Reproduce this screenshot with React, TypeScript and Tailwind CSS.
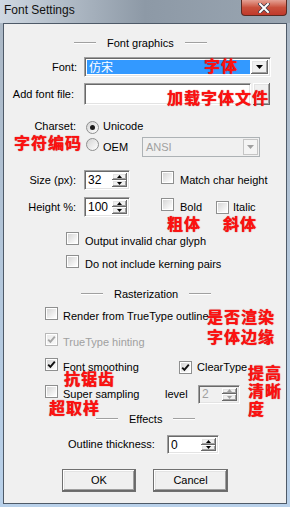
import React from 'react';

const sunken =
  'border border-t-[#a0a0a0] border-l-[#a0a0a0] border-r-white border-b-white shadow-[inset_1px_1px_0_#696969,inset_-1px_-1px_0_#e3e3e3]';
const raised =
  'bg-[#f0f0f0] shadow-[inset_-1px_-1px_0_#696969,inset_1px_1px_0_#ffffff,inset_-2px_-2px_0_#a0a0a0,inset_2px_2px_0_#e3e3e3]';

const Check = ({ checked = false, disabled = false }: { checked?: boolean; disabled?: boolean }) => (
  <span
    className={`relative inline-flex w-[13px] h-[13px] shrink-0 border bg-white ${
      disabled ? 'border-[#b8b8b8]' : 'border-[#8e8f8f]'
    }`}
  >
    <span
      className={`absolute inset-[1px] bg-gradient-to-br ${
        disabled ? 'from-[#ececec] to-[#f8f8f8]' : 'from-[#d6d6d6] to-white'
      }`}
    />
    {checked && (
      <svg viewBox="0 0 11 11" className="absolute inset-0 w-[11px] h-[11px]">
        <path
          d="M2.2 5.6 L4.4 7.9 L8.8 2.6"
          fill="none"
          stroke={disabled ? '#a5a5a5' : '#111'}
          strokeWidth="1.9"
        />
      </svg>
    )}
  </span>
);

const Radio = ({ checked = false }: { checked?: boolean }) => (
  <span className="inline-flex w-[13px] h-[13px] shrink-0 items-center justify-center rounded-full border border-[#8e8f8f] bg-gradient-to-br from-[#d4d4d4] to-white">
    {checked && <span className="w-[5px] h-[5px] rounded-full bg-[#1b1b1b]" />}
  </span>
);

const Arrow = ({ up, disabled }: { up?: boolean; disabled?: boolean }) => (
  <svg viewBox="0 0 5 3" className="w-[5px] h-[3px]">
    <path d={up ? 'M0 3 L2.5 0 L5 3 Z' : 'M0 0 L5 0 L2.5 3 Z'} fill={disabled ? '#a0a0a0' : '#000'} />
  </svg>
);

const Spin = ({
  value,
  w,
  h,
  disabled = false,
}: {
  value: string;
  w: string;
  h: string;
  disabled?: boolean;
}) => (
  <div className={`flex ${w} ${h} ${sunken} p-[2px] ${disabled ? 'bg-[#f0f0f0]' : 'bg-white'}`}>
    <span className={`flex-1 flex items-center pl-[1px] text-[12px] ${disabled ? 'text-[#a0a0a0]' : 'text-black'}`}>
      {value}
    </span>
    <div className="flex flex-col w-[15px]">
      <span className={`flex-1 flex items-center justify-center ${raised}`}>
        <Arrow up disabled={disabled} />
      </span>
      <span className={`flex-1 flex items-center justify-center ${raised}`}>
        <Arrow disabled={disabled} />
      </span>
    </div>
  </div>
);

const Header = ({ title, ml }: { title: string; ml: string }) => (
  <div className={`flex items-center h-[14px] gap-[11px] ${ml}`}>
    <span className="w-[22px] h-[2px] border-t border-t-[#a0a0a0] border-b border-b-white" />
    <span>{title}</span>
    <span className="w-[22px] h-[2px] border-t border-t-[#a0a0a0] border-b border-b-white" />
  </div>
);

const Note = ({ text, cls }: { text: string; cls: string }) => (
  <span
    className={`absolute font-['Noto_Sans_CJK_SC',sans-serif] font-bold text-[16px] leading-[17px] tracking-[1px] text-[#ff1010] [text-shadow:0_0_1px_#b00000] whitespace-nowrap ${cls}`}
  >
    {text}
  </span>
);

export default function App() {
  return (
    <div className="relative w-[290px] h-[507px] overflow-hidden bg-gradient-to-b from-[#aab6c3] via-[#b3c6da] to-[#b9d1ea] font-['Liberation_Sans',Arial,sans-serif] text-[11px] text-black">
      {/* title bar */}
      <div className="relative h-[23px] bg-gradient-to-r from-[#cfd8e2] via-[#8d99a6] to-[#9aa6b2]">
        <span className="absolute left-[4px] top-[3px] text-[12px] leading-[14px] text-[#111]">Font Settings</span>
        <span className="absolute right-[3px] top-0 w-[46px] h-[16px] rounded-b-[4px] border border-[#5a2a22] border-t-0 bg-gradient-to-b from-[#e4a195] via-[#c9503c] to-[#c0392b] flex items-center justify-center">
          <svg viewBox="0 0 12 10" className="w-[12px] h-[10px]">
            <path d="M2 1 L10 9 M10 1 L2 9" stroke="#3a3a4a" strokeWidth="3.4" strokeLinecap="square" />
            <path d="M2 1 L10 9 M10 1 L2 9" stroke="#fff" strokeWidth="2" strokeLinecap="square" />
          </svg>
        </span>
      </div>

      {/* client */}
      <div className="mx-[3px] h-[481px] border border-[#4e5a68] bg-[#f0f0f0] flex flex-col">
        <div className="mt-[12px]">
          <Header title="Font graphics" ml="ml-[70px]" />
        </div>

        <div className="mt-[7px] flex items-center h-[20px]">
          <span className="w-[73px] text-right">Font:</span>
          <div className={`ml-[7px] w-[187px] h-[20px] flex bg-white ${sunken} p-[2px]`}>
            <span className="flex-1 bg-[#3399ff] text-white flex items-center pl-[2px] font-['Noto_Sans_CJK_SC',sans-serif] text-[12px] mr-[1px]">
              仿宋
            </span>
            <span className={`w-[17px] flex items-center justify-center ${raised}`}>
              <svg viewBox="0 0 7 4" className="w-[7px] h-[4px]">
                <path d="M0 0 L7 0 L3.5 4 Z" fill="#000" />
              </svg>
            </span>
          </div>
        </div>

        <div className="mt-[6px] flex items-center h-[22px]">
          <span className="w-[73px] pr-[3px] text-right">Add font file:</span>
          <div className={`ml-[7px] w-[167px] h-[22px] bg-white ${sunken}`} />
          <div className={`ml-[2px] w-[17px] h-[22px] ${raised}`} />
        </div>

        <div className="mt-[14px] flex items-center h-[14px]">
          <span className="w-[73px] pr-[1px] text-right">Charset:</span>
          <span className="ml-[9px]">
            <Radio checked />
          </span>
          <span className="ml-[4px]">Unicode</span>
        </div>

        <div className="mt-[4px] flex items-center h-[20px]">
          <span className="ml-[82px]">
            <Radio />
          </span>
          <span className="ml-[4px] w-[39px]">OEM</span>
          <div className="w-[118px] h-[20px] flex border border-[#adb2b5] bg-[#f0f0f0] p-[1px]">
            <span className="flex-1 flex items-center pl-[2px] text-[#a0a0a0]">ANSI</span>
            <span className="w-[15px] flex items-center justify-center border border-[#c5c5c5] bg-[#f4f4f4]">
              <svg viewBox="0 0 7 4" className="w-[7px] h-[4px]">
                <path d="M0 0 L7 0 L3.5 4 Z" fill="#a0a0a0" />
              </svg>
            </span>
          </div>
        </div>

        <div className="mt-[13px] flex items-center h-[20px]">
          <span className="w-[73px] pr-[1px] text-right">Size (px):</span>
          <span className="ml-[7px]">
            <Spin value="32" w="w-[46px]" h="h-[20px]" />
          </span>
          <span className="ml-[31px]">
            <Check />
          </span>
          <span className="ml-[6px]">Match char height</span>
        </div>

        <div className="mt-[7px] flex items-center h-[20px]">
          <span className="w-[73px] pr-[1px] text-right">Height %:</span>
          <span className="ml-[7px]">
            <Spin value="100" w="w-[46px]" h="h-[20px]" />
          </span>
          <span className="ml-[31px]">
            <Check />
          </span>
          <span className="ml-[6px] w-[36px]">Bold</span>
          <Check />
          <span className="ml-[4px]">Italic</span>
        </div>

        <div className="mt-[17px] flex items-center h-[14px]">
          <span className="ml-[62px]">
            <Check />
          </span>
          <span className="ml-[6px]">Output invalid char glyph</span>
        </div>

        <div className="mt-[9px] flex items-center h-[14px]">
          <span className="ml-[62px]">
            <Check />
          </span>
          <span className="ml-[6px]">Do not include kerning pairs</span>
        </div>

        <div className="mt-[16px]">
          <Header title="Rasterization" ml="ml-[77px]" />
        </div>

        <div className="mt-[8px] flex items-center h-[14px]">
          <span className="ml-[41px]">
            <Check />
          </span>
          <span className="ml-[5px]">Render from TrueType outline</span>
        </div>

        <div className="mt-[12px] flex items-center h-[14px]">
          <span className="ml-[41px]">
            <Check checked disabled />
          </span>
          <span className="ml-[5px] text-[#a0a0a0]">TrueType hinting</span>
        </div>

        <div className="mt-[11px] flex items-center h-[14px]">
          <span className="ml-[41px]">
            <Check checked />
          </span>
          <span className="ml-[5px] w-[116px]">Font smoothing</span>
          <Check checked />
          <span className="ml-[5px]">ClearType</span>
        </div>

        <div className="mt-[10px] flex items-center h-[20px]">
          <span className="ml-[41px]">
            <Check />
          </span>
          <span className="ml-[5px] w-[102px]">Super sampling</span>
          <span className="w-[33px]">level</span>
          <Spin value="2" w="w-[42px]" h="h-[19px]" disabled />
        </div>

        <div className="mt-[8px]">
          <Header title="Effects" ml="ml-[92px]" />
        </div>

        <div className="mt-[9px] flex items-center h-[19px]">
          <span className="ml-[64px] w-[99px]">Outline thickness:</span>
          <Spin value="0" w="w-[52px]" h="h-[19px]" />
        </div>

        <div className="mt-[15px] flex items-center h-[23px]">
          <button className={`ml-[58px] w-[74px] h-[23px] border border-[#707070] ${raised}`}>OK</button>
          <button className={`ml-[17px] w-[75px] h-[23px] border border-[#707070] ${raised}`}>Cancel</button>
        </div>
      </div>

      {/* red annotations */}
      <Note text="字体" cls="left-[204px] top-[57px]" />
      <Note text="加载字体文件" cls="left-[167px] top-[89px]" />
      <Note text="字符编码" cls="left-[14px] top-[134px]" />
      <Note text="粗体" cls="left-[167px] top-[215px]" />
      <Note text="斜体" cls="left-[223px] top-[215px]" />
      <Note text="是否渲染" cls="left-[207px] top-[308px]" />
      <Note text="字体边缘" cls="left-[207px] top-[328px]" />
      <Note text="抗锯齿" cls="left-[64px] top-[370px]" />
      <Note text="提高" cls="left-[248px] top-[364px]" />
      <Note text="清晰" cls="left-[248px] top-[382px]" />
      <Note text="度" cls="left-[248px] top-[400px]" />
      <Note text="超取样" cls="left-[49px] top-[399px]" />
    </div>
  );
}
